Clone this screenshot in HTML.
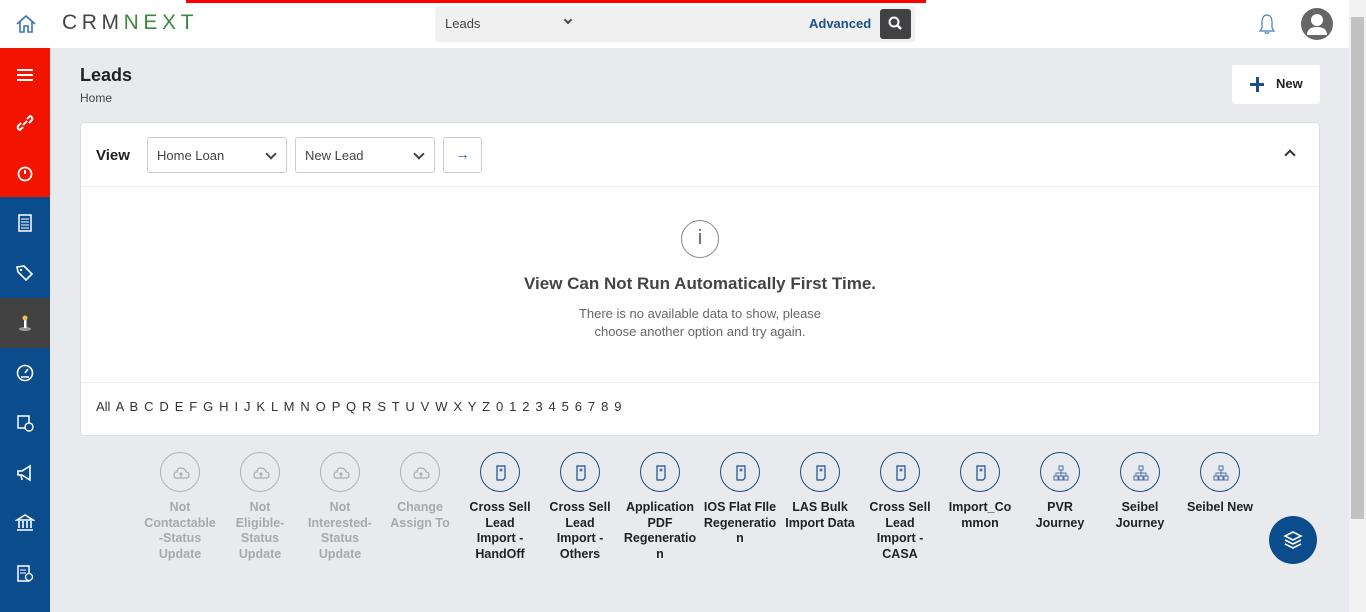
<!DOCTYPE html>
<html><head><meta charset="utf-8"><style>
*{box-sizing:border-box;margin:0;padding:0}
body{width:1366px;height:612px;overflow:hidden;background:#e9eaee;font-family:"Liberation Sans",sans-serif;position:relative;color:#222}
.top{position:absolute;left:0;top:0;width:1349px;height:48px;background:#fff}
.redbar{position:absolute;left:186px;top:0;width:740px;height:3px;background:#f00}
.side{position:absolute;left:0;top:48px;width:50px;height:564px;background:#0b4d8c}
.side .r{position:absolute;left:0;top:0;width:50px;height:149px;background:#f31400}
.side .d{position:absolute;left:0;top:250px;width:50px;height:50px;background:#424242}
.ic{position:absolute;left:15px;width:20px;height:20px}
.scroll{position:absolute;left:1349px;top:0;width:17px;height:612px;background:#f1f1f1}
.scroll div{position:absolute;left:2px;top:17px;width:13px;height:502px;background:#c1c1c1}
.card{position:absolute;left:80px;top:122px;width:1240px;height:314px;background:#fff;border:1px solid #dcdde0;border-radius:4px}
.sel{position:absolute;top:14px;height:36px;border:1px solid #ccc;border-radius:3px;font-size:13px;color:#444;padding:10px 9px}
.sel:after{content:"";position:absolute;right:11px;top:12px;width:6px;height:6px;border-right:2px solid #444;border-bottom:2px solid #444;transform:rotate(45deg)}
.act{position:absolute;top:452px;width:80px;text-align:center;font-size:12.5px;font-weight:bold;line-height:15.5px;color:#222}
.act .c{width:40px;height:40px;border-radius:50%;border:1.5px solid #1a4f8a;margin:0 auto 8px;position:relative}
.act .c svg{position:absolute;left:11px;top:11px}
.act.g{color:#a9a9a9}.act.g .c{border-color:#b0b0b0}
</style></head><body>
<div class="top"></div>
<div class="redbar"></div>
<svg style="position:absolute;left:15px;top:13px" width="22" height="22" viewBox="0 0 22 22"><path d="M2 11 L11 3 L20 11 M5 9 V19 H9 V13 H13 V19 H17 V9" fill="none" stroke="#3a73b8" stroke-width="1.6"/></svg>
<div style="position:absolute;left:62px;top:11px;font-size:21px;letter-spacing:4.6px;color:#444">CRM<span style="color:#3b8a3e">NEXT</span></div>
<div style="position:absolute;left:435px;top:6px;width:480px;height:36px;background:#f0f0f0;border-radius:3px"></div>
<div style="position:absolute;left:445px;top:16px;font-size:13px;color:#444">Leads</div>
<div style="position:absolute;left:565px;top:17px;width:6px;height:6px;border-right:2px solid #444;border-bottom:2px solid #444;transform:rotate(45deg)"></div>
<div style="position:absolute;left:809px;top:16px;font-size:13px;color:#1a4f8a;font-weight:bold">Advanced</div>
<div style="position:absolute;left:880px;top:9px;width:31px;height:30px;background:#424245;border-radius:3px"></div>
<svg style="position:absolute;left:887px;top:15px" width="17" height="17"><circle cx="7" cy="7" r="4.5" fill="none" stroke="#fff" stroke-width="2"/><path d="M10 10 L14 14" stroke="#fff" stroke-width="2.5"/></svg>
<svg style="position:absolute;left:1257px;top:13px" width="20" height="22"><path d="M10 2 C6 2 5 6 5 10 V15 L3 18 H17 L15 15 V10 C15 6 14 2 10 2 Z M8 19 Q10 22 12 19" fill="none" stroke="#4b7fc0" stroke-width="1.2"/></svg>
<svg style="position:absolute;left:1300px;top:7px" width="34" height="34"><circle cx="17" cy="17" r="16" fill="#666"/><circle cx="17" cy="13" r="6" fill="#fff"/><path d="M7 28 Q7 20 17 20 Q27 20 27 28 Z" fill="#fff"/></svg>
<div class="scroll"><div></div></div>
<div class="side"><div class="r"></div><div class="d"></div>
<svg class="ic" style="top:17px" viewBox="0 0 20 20"><path d="M2 5H18M2 10H18M2 15H18" stroke="#fff" stroke-width="2"/></svg>
<svg class="ic" style="top:65px" viewBox="0 0 20 20"><path d="M8 12 L12 8 M6 10 L3 13 Q2 16 5 17 L8 14 M14 10 L17 7 Q18 4 15 3 L12 6" fill="none" stroke="#fff" stroke-width="2"/></svg>
<svg class="ic" style="top:115px" viewBox="0 0 20 20"><circle cx="10" cy="11" r="6.5" fill="none" stroke="#fff" stroke-width="1.8"/><path d="M10 7V11" stroke="#fff" stroke-width="2"/></svg>
<svg class="ic" style="top:165px" viewBox="0 0 20 20"><rect x="4" y="2" width="12" height="16" fill="none" stroke="#fff" stroke-width="1.5"/><path d="M6 6H14M6 9H14M6 12H14M6 15H14" stroke="#fff"/></svg>
<svg class="ic" style="top:215px" viewBox="0 0 20 20"><path d="M2 4 L9 3 L17 11 L11 17 L3 9 Z" fill="none" stroke="#fff" stroke-width="1.6"/><circle cx="6" cy="7" r="1.2" fill="#fff"/></svg>
<svg class="ic" style="top:265px" viewBox="0 0 20 20"><ellipse cx="10" cy="16" rx="6" ry="2" fill="#999"/><rect x="9" y="6" width="2.5" height="9" fill="#fff"/><circle cx="10" cy="5" r="2.5" fill="#e8c060"/></svg>
<svg class="ic" style="top:315px" viewBox="0 0 20 20"><circle cx="10" cy="10" r="7.5" fill="none" stroke="#fff" stroke-width="1.6"/><path d="M10 10 L13 6 M6 14H14" stroke="#fff" stroke-width="1.6"/></svg>
<svg class="ic" style="top:365px" viewBox="0 0 20 20"><rect x="3" y="3" width="11" height="12" fill="none" stroke="#fff" stroke-width="1.5"/><circle cx="14" cy="14" r="4" fill="#0b4d8c" stroke="#fff" stroke-width="1.4"/></svg>
<svg class="ic" style="top:415px" viewBox="0 0 20 20"><path d="M3 8H7L15 3V17L7 12H3Z M6 12 L7 17" fill="none" stroke="#fff" stroke-width="1.6"/></svg>
<svg class="ic" style="top:465px" viewBox="0 0 20 20"><path d="M2 7 L10 2 L18 7Z M4 8V15M8 8V15M12 8V15M16 8V15M2 17H18" fill="none" stroke="#fff" stroke-width="1.6"/></svg>
<svg class="ic" style="top:515px" viewBox="0 0 20 20"><rect x="3" y="3" width="11" height="15" fill="none" stroke="#fff" stroke-width="1.5"/><path d="M5 7H11M5 10H11" stroke="#fff"/><circle cx="14" cy="14" r="3.5" fill="#0b4d8c" stroke="#fff" stroke-width="1.3"/></svg>
</div>
<div style="position:absolute;left:80px;top:65px;font-size:18px;font-weight:bold;color:#222">Leads</div>
<div style="position:absolute;left:80px;top:91px;font-size:12px;color:#444">Home</div>
<div style="position:absolute;left:1232px;top:65px;width:88px;height:39px;background:#fff;border-radius:3px"></div>
<div style="position:absolute;left:1250px;top:83px;width:14px;height:3px;background:#1a4f8a"></div>
<div style="position:absolute;left:1256px;top:77px;width:3px;height:15px;background:#1a4f8a"></div>
<div style="position:absolute;left:1276px;top:76px;font-size:13px;font-weight:bold">New</div>
<div class="card">
<div style="position:absolute;left:15px;top:24px;font-size:15px;font-weight:bold">View</div>
<div class="sel" style="left:66px;width:140px">Home Loan</div>
<div class="sel" style="left:214px;width:140px">New Lead</div>
<div style="position:absolute;left:362px;top:14px;width:39px;height:36px;border:1px solid #ccc;border-radius:3px;color:#1a4f8a;text-align:center;font-size:14px;line-height:33px">&#8594;</div>
<div style="position:absolute;left:1205px;top:28px;width:8px;height:8px;border-left:2px solid #333;border-top:2px solid #333;transform:rotate(45deg)"></div>
<div style="position:absolute;left:0;top:63px;width:100%;border-top:1px solid #eee"></div>
<div style="position:absolute;left:600px;top:97px;width:38px;height:38px;border:1.5px solid #888;border-radius:50%;text-align:center;font-size:20px;line-height:34px;color:#666">i</div>
<div style="position:absolute;left:0;width:100%;top:151px;text-align:center;font-size:17px;font-weight:bold;color:#444">View Can Not Run Automatically First Time.</div>
<div style="position:absolute;left:0;width:100%;top:182px;text-align:center;font-size:13px;line-height:18px;color:#666">There is no available data to show, please<br>choose another option and try again.</div>
<div style="position:absolute;left:0;top:259px;width:100%;border-top:1px solid #eee"></div>
<div style="position:absolute;left:15px;top:276px;font-size:13px;color:#333;word-spacing:2.3px">All A B C D E F G H I J K L M N O P Q R S T U V W X Y Z 0 1 2 3 4 5 6 7 8 9</div>
</div>
<div class="act g" style="left:140px"><div class="c"><svg width="18" height="18"><path d="M4 14 H14 Q17 14 17 11 Q17 8 14 8 Q13 4 9 4 Q5 4 5 8 Q2 8 2 11 Q2 14 4 14Z M9 8V13 M7 10H11" fill="none" stroke="#aaa" stroke-width="1.2"/></svg></div>Not<br>Contactable<br>-Status<br>Update</div>
<div class="act g" style="left:220px"><div class="c"><svg width="18" height="18"><path d="M4 14 H14 Q17 14 17 11 Q17 8 14 8 Q13 4 9 4 Q5 4 5 8 Q2 8 2 11 Q2 14 4 14Z M9 8V13 M7 10H11" fill="none" stroke="#aaa" stroke-width="1.2"/></svg></div>Not<br>Eligible-<br>Status<br>Update</div>
<div class="act g" style="left:300px"><div class="c"><svg width="18" height="18"><path d="M4 14 H14 Q17 14 17 11 Q17 8 14 8 Q13 4 9 4 Q5 4 5 8 Q2 8 2 11 Q2 14 4 14Z M9 8V13 M7 10H11" fill="none" stroke="#aaa" stroke-width="1.2"/></svg></div>Not<br>Interested-<br>Status<br>Update</div>
<div class="act g" style="left:380px"><div class="c"><svg width="18" height="18"><path d="M4 14 H14 Q17 14 17 11 Q17 8 14 8 Q13 4 9 4 Q5 4 5 8 Q2 8 2 11 Q2 14 4 14Z M9 8V13 M7 10H11" fill="none" stroke="#aaa" stroke-width="1.2"/></svg></div>Change<br>Assign To</div>
<div class="act" style="left:460px"><div class="c"><svg width="18" height="18"><path d="M5 2H13V14L11 16H5Z" fill="none" stroke="#1a4f8a" stroke-width="1.2"/><circle cx="9" cy="6" r="1.5" fill="#4a6fb0"/></svg></div>Cross Sell<br>Lead<br>Import -<br>HandOff</div>
<div class="act" style="left:540px"><div class="c"><svg width="18" height="18"><path d="M5 2H13V14L11 16H5Z" fill="none" stroke="#1a4f8a" stroke-width="1.2"/><circle cx="9" cy="6" r="1.5" fill="#4a6fb0"/></svg></div>Cross Sell<br>Lead<br>Import -<br>Others</div>
<div class="act" style="left:620px"><div class="c"><svg width="18" height="18"><path d="M5 2H13V14L11 16H5Z" fill="none" stroke="#1a4f8a" stroke-width="1.2"/><circle cx="9" cy="6" r="1.5" fill="#4a6fb0"/></svg></div>Application<br>PDF<br>Regeneratio<br>n</div>
<div class="act" style="left:700px"><div class="c"><svg width="18" height="18"><path d="M5 2H13V14L11 16H5Z" fill="none" stroke="#1a4f8a" stroke-width="1.2"/><circle cx="9" cy="6" r="1.5" fill="#4a6fb0"/></svg></div>IOS Flat FIle<br>Regeneratio<br>n</div>
<div class="act" style="left:780px"><div class="c"><svg width="18" height="18"><path d="M5 2H13V14L11 16H5Z" fill="none" stroke="#1a4f8a" stroke-width="1.2"/><circle cx="9" cy="6" r="1.5" fill="#4a6fb0"/></svg></div>LAS Bulk<br>Import Data</div>
<div class="act" style="left:860px"><div class="c"><svg width="18" height="18"><path d="M5 2H13V14L11 16H5Z" fill="none" stroke="#1a4f8a" stroke-width="1.2"/><circle cx="9" cy="6" r="1.5" fill="#4a6fb0"/></svg></div>Cross Sell<br>Lead<br>Import -<br>CASA</div>
<div class="act" style="left:940px"><div class="c"><svg width="18" height="18"><path d="M5 2H13V14L11 16H5Z" fill="none" stroke="#1a4f8a" stroke-width="1.2"/><circle cx="9" cy="6" r="1.5" fill="#4a6fb0"/></svg></div>Import_Co<br>mmon</div>
<div class="act" style="left:1020px"><div class="c"><svg width="18" height="18"><path d="M7 2H11V6H7Z M2 12H6V16H2Z M7 12H11V16H7Z M12 12H16V16H12Z M9 6V12 M4 12V9H14V12" fill="none" stroke="#4a6fb0" stroke-width="1"/></svg></div>PVR<br>Journey</div>
<div class="act" style="left:1100px"><div class="c"><svg width="18" height="18"><path d="M7 2H11V6H7Z M2 12H6V16H2Z M7 12H11V16H7Z M12 12H16V16H12Z M9 6V12 M4 12V9H14V12" fill="none" stroke="#4a6fb0" stroke-width="1"/></svg></div>Seibel<br>Journey</div>
<div class="act" style="left:1180px"><div class="c"><svg width="18" height="18"><path d="M7 2H11V6H7Z M2 12H6V16H2Z M7 12H11V16H7Z M12 12H16V16H12Z M9 6V12 M4 12V9H14V12" fill="none" stroke="#4a6fb0" stroke-width="1"/></svg></div>Seibel New</div>
<div style="position:absolute;left:1269px;top:516px;width:48px;height:48px;border-radius:50%;background:#0b4d8c"></div>
<svg style="position:absolute;left:1283px;top:530px" width="20" height="20"><path d="M10 2 L18 6 L10 10 L2 6Z M2 10 L10 14 L18 10 M2 14 L10 18 L18 14" fill="none" stroke="#fff" stroke-width="1.6"/></svg>
</body></html>
